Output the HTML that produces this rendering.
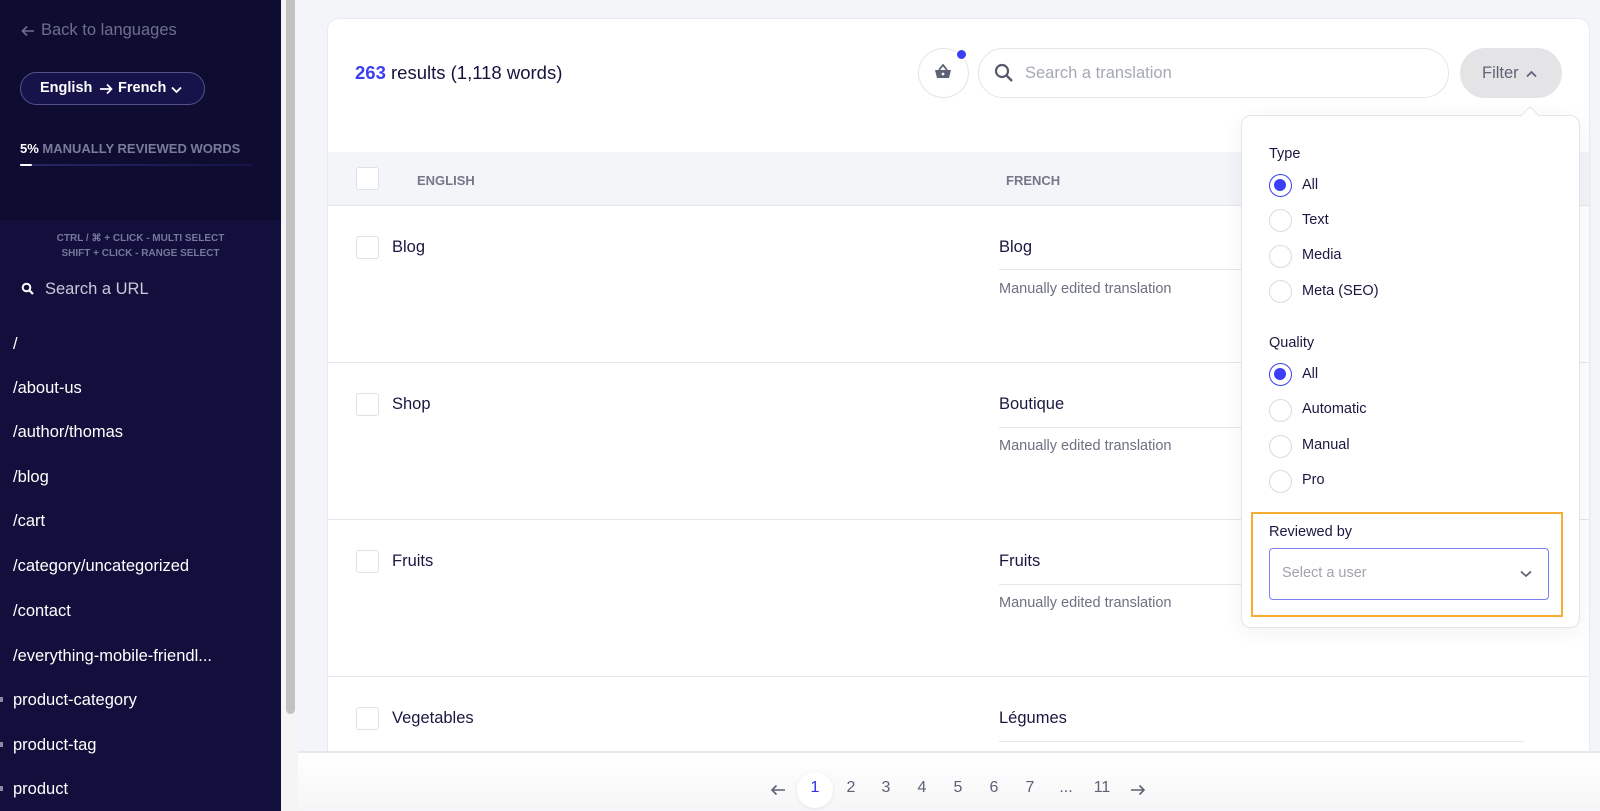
<!DOCTYPE html>
<html><head><meta charset="utf-8"><style>
*{box-sizing:border-box;margin:0;padding:0}
body{width:1600px;height:811px;overflow:hidden;background:#f3f5f9;font-family:"Liberation Sans",sans-serif;position:relative}
.abs{position:absolute}
#side{left:0;top:0;width:281px;height:811px;background:#120f3c}
#sideTop{left:0;top:0;width:281px;height:220px;background:#0e0c31}
.t{position:absolute;white-space:nowrap}
.link{position:absolute;left:13px;color:#fff;font-size:16.5px;line-height:20px}
#sb{left:281px;top:0;width:17px;height:811px;background:#f5f5f5}
#thumb{left:286px;top:0;width:9px;height:714px;background:#c1c1c1;border-radius:0 0 5px 5px}
#card{left:327px;top:18px;width:1263px;height:733px;background:#fff;border-radius:12px 12px 0 0;border:1px solid #e8ebf0;border-bottom:none;overflow:hidden}
.cb{position:absolute;width:23px;height:23px;border:1px solid #dde1e8;border-radius:3px;background:#fff}
.hline{position:absolute;height:1px;background:#e3e6ec}
.radio{position:absolute;width:23px;height:23px;border:1px solid #d8dbe2;border-radius:50%;background:#fff}
.radio.on{border:1.5px solid #3b3ff5}
.radio.on:after{content:"";position:absolute;left:4px;top:4px;width:12px;height:12px;border-radius:50%;background:#3b3ff5}
.rl{position:absolute;font-size:14.5px;color:#1a1840}
.pg{position:absolute;top:779px;font-size:16px;color:#5d6275;width:30px;text-align:center}
</style></head><body>
<div id="side" class="abs"></div>
<div id="sideTop" class="abs"></div>
<svg class="abs" style="left:21px;top:25px" width="14" height="12" viewBox="0 0 14 12"><path d="M13 6H2M6 1.5 1.5 6 6 10.5" stroke="#6e6f8c" stroke-width="1.6" fill="none"/></svg>
<div class="t" style="left:41px;top:21px;color:#6e6f8c;font-size:16.5px">Back to languages</div>
<div class="abs" style="left:20px;top:72px;width:185px;height:33px;border:1px solid #54528a;border-radius:17px;background:#16134a"></div>
<div class="t" style="left:40px;top:80px;color:#fff;font-size:14.5px;font-weight:bold">English</div>
<svg class="abs" style="left:99px;top:83px" width="14" height="12" viewBox="0 0 14 12"><path d="M1 6h11M8 1.5 12.5 6 8 10.5" stroke="#fff" stroke-width="1.7" fill="none"/></svg>
<div class="t" style="left:118px;top:80px;color:#fff;font-size:14.5px;font-weight:bold">French</div>
<svg class="abs" style="left:171px;top:86px" width="11" height="8" viewBox="0 0 11 8"><path d="M1 1.5 5.5 6 10 1.5" stroke="#fff" stroke-width="1.8" fill="none"/></svg>
<div class="t" style="left:20px;top:141px;color:#fff;font-size:13px;font-weight:bold">5% <span style="color:#7a7b99">MANUALLY REVIEWED WORDS</span></div>
<div class="abs" style="left:20px;top:164px;width:232px;height:2px;background:linear-gradient(90deg,#2a2760,#16134a)"></div>
<div class="abs" style="left:20px;top:164px;width:12px;height:2px;background:#fff;border-radius:1px"></div>
<div class="t" style="left:0;width:281px;text-align:center;top:231px;color:#76779a;font-size:10px;font-weight:bold;line-height:15px">CTRL / ⌘ + CLICK - MULTI SELECT<br>SHIFT + CLICK - RANGE SELECT</div>
<svg class="abs" style="left:21px;top:282px" width="14" height="14" viewBox="0 0 14 14"><circle cx="5.5" cy="5.5" r="3.8" stroke="#fff" stroke-width="2" fill="none"/><path d="M8.5 8.5 12 12" stroke="#fff" stroke-width="2.2"/></svg>
<div class="t" style="left:45px;top:280px;color:#c8c9da;font-size:16.5px">Search a URL</div>
<div class="link" style="top:334px">/</div>
<div class="link" style="top:378px">/about-us</div>
<div class="link" style="top:422px">/author/thomas</div>
<div class="link" style="top:467px">/blog</div>
<div class="link" style="top:511px">/cart</div>
<div class="link" style="top:556px">/category/uncategorized</div>
<div class="link" style="top:601px">/contact</div>
<div class="link" style="top:646px">/everything-mobile-friendl...</div>
<div class="link" style="top:690px">product-category</div>
<div class="link" style="top:735px">product-tag</div>
<div class="link" style="top:779px">product</div>
<div class="t" style="left:0;top:697px;width:3px;height:5px;background:#8a89a8"></div>
<div class="t" style="left:0;top:742px;width:3px;height:5px;background:#8a89a8"></div>
<div class="t" style="left:0;top:786px;width:3px;height:5px;background:#8a89a8"></div>
<div id="sb" class="abs"></div><div id="thumb" class="abs"></div>

<div id="card" class="abs"></div>
<div class="t" style="left:355px;top:62px;font-size:18.5px;color:#15133c"><b style="color:#3a3ff2">263</b> results (1,118 words)</div>
<div class="abs" style="left:918px;top:48px;width:51px;height:50px;border:1px solid #e2e5ea;border-radius:50%;background:#fff"></div>
<svg class="abs" style="left:934px;top:64px" width="18" height="16" viewBox="0 0 18 16"><path d="M5 6 9 1 13 6" stroke="#5d6275" stroke-width="1.8" fill="none"/><path d="M1 6h16l-2 8H3z" fill="#5d6275"/><circle cx="9" cy="10" r="1.4" fill="#fff"/></svg>
<div class="abs" style="left:955px;top:48px;width:13px;height:13px;border-radius:50%;background:#3a3ff2;border:2px solid #fff"></div>
<div class="abs" style="left:978px;top:48px;width:471px;height:50px;border:1px solid #e2e5ea;border-radius:25px;background:#fff"></div>
<svg class="abs" style="left:994px;top:63px" width="20" height="20" viewBox="0 0 20 20"><circle cx="8" cy="8" r="6" stroke="#555a6c" stroke-width="2.2" fill="none"/><path d="M12.5 12.5 18 18" stroke="#555a6c" stroke-width="2.4"/></svg>
<div class="t" style="left:1025px;top:64px;font-size:16.5px;color:#a5a9b5">Search a translation</div>
<div class="abs" style="left:1460px;top:48px;width:102px;height:50px;border-radius:25px;background:#e4e4e6"></div>
<div class="t" style="left:1482px;top:64px;font-size:16.5px;color:#5f6478">Filter</div>
<svg class="abs" style="left:1526px;top:70px" width="11" height="8" viewBox="0 0 11 8"><path d="M1 6.5 5.5 2 10 6.5" stroke="#5f6478" stroke-width="1.8" fill="none"/></svg>

<div class="abs" style="left:328px;top:152px;width:1261px;height:54px;background:#f4f5f8;border-bottom:1px solid #e3e6ec"></div>
<div class="cb" style="left:356px;top:167px"></div>
<div class="t" style="left:417px;top:173px;font-size:13px;font-weight:bold;color:#737789">ENGLISH</div>
<div class="t" style="left:1006px;top:173px;font-size:13px;font-weight:bold;color:#737789">FRENCH</div>

<div class="hline" style="left:328px;top:362px;width:1261px"></div>
<div class="hline" style="left:328px;top:519px;width:1261px"></div>
<div class="hline" style="left:328px;top:676px;width:1261px"></div>

<div class="cb" style="left:356px;top:236px"></div>
<div class="t" style="left:392px;top:238px;font-size:16.5px;color:#1a1840">Blog</div>
<div class="t" style="left:999px;top:238px;font-size:16.5px;color:#1a1840">Blog</div>
<div class="hline" style="left:999px;top:269px;width:525px"></div>
<div class="t" style="left:999px;top:281px;font-size:14.5px;color:#6d7082">Manually edited translation</div>

<div class="cb" style="left:356px;top:393px"></div>
<div class="t" style="left:392px;top:395px;font-size:16.5px;color:#1a1840">Shop</div>
<div class="t" style="left:999px;top:395px;font-size:16.5px;color:#1a1840">Boutique</div>
<div class="hline" style="left:999px;top:427px;width:525px"></div>
<div class="t" style="left:999px;top:438px;font-size:14.5px;color:#6d7082">Manually edited translation</div>

<div class="cb" style="left:356px;top:550px"></div>
<div class="t" style="left:392px;top:552px;font-size:16.5px;color:#1a1840">Fruits</div>
<div class="t" style="left:999px;top:552px;font-size:16.5px;color:#1a1840">Fruits</div>
<div class="hline" style="left:999px;top:584px;width:525px"></div>
<div class="t" style="left:999px;top:595px;font-size:14.5px;color:#6d7082">Manually edited translation</div>

<div class="cb" style="left:356px;top:707px"></div>
<div class="t" style="left:392px;top:709px;font-size:16.5px;color:#1a1840">Vegetables</div>
<div class="t" style="left:999px;top:709px;font-size:16.5px;color:#1a1840">Légumes</div>
<div class="hline" style="left:999px;top:741px;width:525px"></div>

<div class="abs" style="left:298px;top:751px;width:1302px;height:60px;background:linear-gradient(#fff,#f6f6f8);border-top:2px solid #e6e7ea"></div>
<svg class="abs" style="left:770px;top:784px" width="16" height="12" viewBox="0 0 16 12"><path d="M15 6H2M6.5 1.5 2 6 6.5 10.5" stroke="#5d6275" stroke-width="1.6" fill="none"/></svg>
<div class="abs" style="left:797px;top:772px;width:36px;height:36px;border-radius:50%;background:#fff;box-shadow:0 1px 4px rgba(0,0,0,.08)"></div>
<div class="pg" style="left:800px;color:#2f33e8">1</div>
<div class="pg" style="left:836px">2</div>
<div class="pg" style="left:871px">3</div>
<div class="pg" style="left:907px">4</div>
<div class="pg" style="left:943px">5</div>
<div class="pg" style="left:979px">6</div>
<div class="pg" style="left:1015px">7</div>
<div class="pg" style="left:1051px">...</div>
<div class="pg" style="left:1087px">11</div>
<svg class="abs" style="left:1130px;top:784px" width="16" height="12" viewBox="0 0 16 12"><path d="M1 6h13M9.5 1.5 14 6 9.5 10.5" stroke="#5d6275" stroke-width="1.6" fill="none"/></svg>

<div class="abs" style="left:1241px;top:115px;width:339px;height:513px;background:#fff;border:1px solid #e2e5ea;border-radius:10px;box-shadow:0 4px 20px rgba(0,0,0,.06)"></div>
<div class="abs" style="left:1523px;top:109px;width:14px;height:14px;background:#fff;border-left:1px solid #e2e5ea;border-top:1px solid #e2e5ea;transform:rotate(45deg)"></div>
<div class="t" style="left:1269px;top:146px;font-size:14.5px;color:#1a1840">Type</div>
<div class="radio on" style="left:1269px;top:174px"></div><div class="rl" style="left:1302px;top:177px">All</div>
<div class="radio" style="left:1269px;top:209px"></div><div class="rl" style="left:1302px;top:212px">Text</div>
<div class="radio" style="left:1269px;top:245px"></div><div class="rl" style="left:1302px;top:247px">Media</div>
<div class="radio" style="left:1269px;top:280px"></div><div class="rl" style="left:1302px;top:283px">Meta (SEO)</div>
<div class="t" style="left:1269px;top:335px;font-size:14.5px;color:#1a1840">Quality</div>
<div class="radio on" style="left:1269px;top:363px"></div><div class="rl" style="left:1302px;top:366px">All</div>
<div class="radio" style="left:1269px;top:399px"></div><div class="rl" style="left:1302px;top:401px">Automatic</div>
<div class="radio" style="left:1269px;top:435px"></div><div class="rl" style="left:1302px;top:437px">Manual</div>
<div class="radio" style="left:1269px;top:470px"></div><div class="rl" style="left:1302px;top:472px">Pro</div>
<div class="abs" style="left:1251px;top:512px;width:312px;height:105px;border:2px solid #f7ad34"></div>
<div class="t" style="left:1269px;top:524px;font-size:14.5px;color:#1a1840">Reviewed by</div>
<div class="abs" style="left:1269px;top:548px;width:280px;height:52px;border:1px solid #7c7ff5;border-radius:4px"></div>
<div class="t" style="left:1282px;top:565px;font-size:14.5px;color:#a1a3ad">Select a user</div>
<svg class="abs" style="left:1520px;top:570px" width="12" height="8" viewBox="0 0 12 8"><path d="M1 1.5 6 6 11 1.5" stroke="#555a6c" stroke-width="1.6" fill="none"/></svg>
</body></html>
